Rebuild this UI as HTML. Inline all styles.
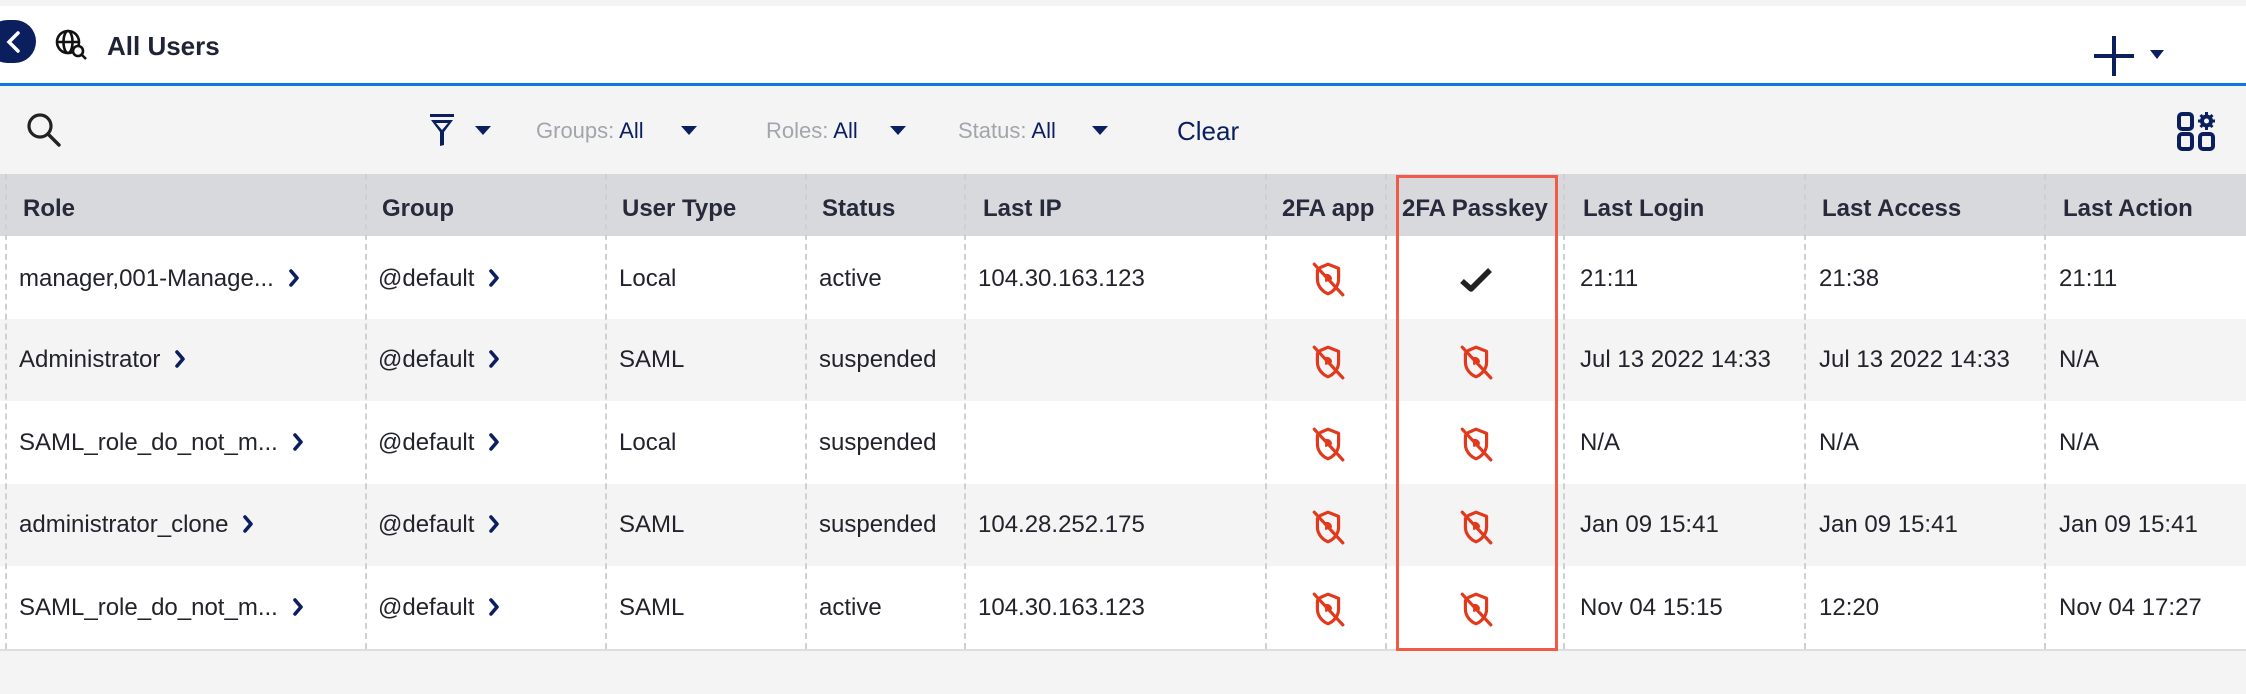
<!DOCTYPE html>
<html><head><meta charset="utf-8"><style>
*{margin:0;padding:0;box-sizing:border-box}
body{width:2246px;height:694px;background:#f4f4f4;position:relative;overflow:hidden;font-family:"Liberation Sans",sans-serif;color:#22232b}
.a{position:absolute}
.hdr{position:absolute;left:0;top:6px;width:2246px;height:78px;background:#fff}
.blue{position:absolute;left:0;top:83px;width:2246px;height:3px;background:#1673e6}
.thead{position:absolute;left:0;top:174px;width:2246px;height:62px;background:#d8d9dd}
.row{position:absolute;left:0;width:2246px;height:83px}
.th{position:absolute;top:178px;height:62px;line-height:62px;font-size:24px;font-weight:bold;color:#262a3a}
.td{position:absolute;font-size:24px;line-height:30px;white-space:nowrap}
.dv{position:absolute;top:174px;height:475px;border-left:2px dashed #cfd0d4;width:0}
.chev{display:inline-block;width:12px;height:18px;margin-left:14px;vertical-align:-1px}
.fl{position:absolute;top:118px;font-size:22px;color:#a3a5ad}
.fl b{font-weight:normal;color:#0b1f5e}
.car{position:absolute;width:0;height:0;border-left:8px solid transparent;border-right:8px solid transparent;border-top:9px solid #0b1f5e}
</style></head><body>
<svg width="0" height="0" style="position:absolute"><defs>
<symbol id="sh" viewBox="0 0 32 34"><g stroke="#e2391c" stroke-width="3" fill="none" stroke-linecap="round" stroke-linejoin="round"><path d="M9 6 L16 3 L26 7 V17 C26 24 21 29 16 31 C11 29 6 24 6 17 V9"/><path d="M14 13 A4 4 0 0 1 19 17 L14 19 Z" fill="#e2391c" stroke-width="1.5"/><path d="M3 3 L30 32"/></g></symbol>
<symbol id="ch" viewBox="0 0 12 18"><path d="M3 2 L9 9 L3 16" stroke="#0b1f5e" stroke-width="3.6" fill="none" stroke-linecap="round" stroke-linejoin="round"/></symbol>
</defs></svg>
<div class="hdr"></div>
<div class="blue"></div>
<div class="a" style="left:-14px;top:20px;width:50px;height:43px;border-radius:22px;background:#0b1f5e"></div>
<svg class="a" style="left:4px;top:30px" width="20" height="24" viewBox="0 0 20 24"><path d="M14 3 L5 12 L14 21" stroke="#fff" stroke-width="3.5" fill="none" stroke-linecap="round"/></svg>
<svg class="a" style="left:54px;top:29px" width="34" height="32" viewBox="0 0 34 32"><g stroke="#111" stroke-width="2.6" fill="none"><circle cx="14" cy="13" r="11"/><ellipse cx="14" cy="13" rx="4.5" ry="11"/><line x1="3" y1="13" x2="25" y2="13"/><circle cx="24" cy="22" r="5" fill="#fff"/><line x1="28" y1="26" x2="32" y2="30"/></g></svg>
<div class="a" style="left:107px;top:31px;font-size:26px;font-weight:bold;color:#1f2335">All Users</div>
<svg class="a" style="left:2092px;top:36px" width="44" height="40" viewBox="0 0 44 40"><path d="M22 0V40M2 20H42" stroke="#0b1f5e" stroke-width="4"/></svg>
<div class="car" style="left:2150px;top:50px;border-left-width:7px;border-right-width:7px"></div>

<svg class="a" style="left:26px;top:112px" width="36" height="36" viewBox="0 0 36 36"><circle cx="14" cy="14" r="11" stroke="#222" stroke-width="3.2" fill="none"/><path d="M22 22 L33 33" stroke="#222" stroke-width="3.4" stroke-linecap="round"/></svg>
<svg class="a" style="left:428px;top:113px" width="28" height="34" viewBox="0 0 28 34"><rect x="2" y="1" width="24" height="3" fill="#0b1f5e"/><path d="M3 7 H25 L16 19 V32 L12 33 V19 Z" fill="#0b1f5e"/><path d="M8 10 H20 L14 17 Z" fill="#f4f4f4"/></svg>
<div class="car" style="left:475px;top:126px"></div>
<div class="fl" style="left:536px">Groups: <b>All</b></div><div class="car" style="left:681px;top:126px"></div>
<div class="fl" style="left:766px">Roles: <b>All</b></div><div class="car" style="left:890px;top:126px"></div>
<div class="fl" style="left:958px">Status: <b>All</b></div><div class="car" style="left:1092px;top:126px"></div>
<div class="a" style="left:1177px;top:116px;font-size:26px;color:#0b1f5e">Clear</div>
<svg class="a" style="left:2176px;top:110px" width="42" height="42" viewBox="0 0 42 42"><g stroke="#0b1f5e" stroke-width="4" fill="none"><rect x="3" y="4" width="13" height="15" rx="3"/><rect x="3" y="24" width="13" height="15" rx="3"/><rect x="24" y="24" width="13" height="15" rx="3"/><circle cx="30.5" cy="11" r="4.5"/></g><g stroke="#0b1f5e" stroke-width="3"><path d="M30.5 2V5M30.5 17V20M22 11H25M36 11H39M24.5 5L26.5 7M34.5 15L36.5 17M24.5 17L26.5 15M34.5 7L36.5 5"/></g></svg>

<div class="thead"></div>
<div class="row" style="top:236px;background:#fff"></div>
<div class="row" style="top:319px;background:#f4f4f4"></div>
<div class="row" style="top:401px;background:#fff"></div>
<div class="row" style="top:484px;background:#f4f4f4"></div>
<div class="row" style="top:566px;background:#fff"></div>
<div class="a" style="left:0;top:649px;width:2246px;height:2px;background:#dcdde0"></div>

<div class="dv" style="left:5px"></div><div class="dv" style="left:365px"></div><div class="dv" style="left:605px"></div><div class="dv" style="left:805px"></div><div class="dv" style="left:964px"></div><div class="dv" style="left:1265px"></div><div class="dv" style="left:1385px"></div><div class="dv" style="left:1563px"></div><div class="dv" style="left:1804px"></div><div class="dv" style="left:2044px"></div>

<div class="th" style="left:23px">Role</div><div class="th" style="left:382px">Group</div><div class="th" style="left:622px">User Type</div><div class="th" style="left:822px">Status</div><div class="th" style="left:983px">Last IP</div><div class="th" style="left:1282px">2FA app</div><div class="th" style="left:1402px">2FA Passkey</div><div class="th" style="left:1583px">Last Login</div><div class="th" style="left:1822px">Last Access</div><div class="th" style="left:2063px">Last Action</div>

<div class="td" style="left:19px;top:264px">manager,001-Manage...<svg class="chev"><use href="#ch"/></svg></div>
<div class="td" style="left:378px;top:264px">@default<svg class="chev"><use href="#ch"/></svg></div>
<div class="td" style="left:619px;top:264px">Local</div><div class="td" style="left:819px;top:264px">active</div><div class="td" style="left:978px;top:264px">104.30.163.123</div>
<svg class="a" style="left:1311px;top:261px" width="34" height="36"><use href="#sh"/></svg>
<svg class="a" style="left:1458px;top:266px" width="36" height="28" viewBox="0 0 36 28"><path d="M4 15 L13 23 L32 4" stroke="#222" stroke-width="5.5" fill="none" stroke-linejoin="round"/></svg>
<div class="td" style="left:1580px;top:264px">21:11</div><div class="td" style="left:1819px;top:264px">21:38</div><div class="td" style="left:2059px;top:264px">21:11</div>

<div class="td" style="left:19px;top:345px">Administrator<svg class="chev"><use href="#ch"/></svg></div>
<div class="td" style="left:378px;top:345px">@default<svg class="chev"><use href="#ch"/></svg></div>
<div class="td" style="left:619px;top:345px">SAML</div><div class="td" style="left:819px;top:345px">suspended</div>
<svg class="a" style="left:1311px;top:344px" width="34" height="36"><use href="#sh"/></svg>
<svg class="a" style="left:1459px;top:344px" width="34" height="36"><use href="#sh"/></svg>
<div class="td" style="left:1580px;top:345px">Jul 13 2022 14:33</div><div class="td" style="left:1819px;top:345px">Jul 13 2022 14:33</div><div class="td" style="left:2059px;top:345px">N/A</div>

<div class="td" style="left:19px;top:428px">SAML_role_do_not_m...<svg class="chev"><use href="#ch"/></svg></div>
<div class="td" style="left:378px;top:428px">@default<svg class="chev"><use href="#ch"/></svg></div>
<div class="td" style="left:619px;top:428px">Local</div><div class="td" style="left:819px;top:428px">suspended</div>
<svg class="a" style="left:1311px;top:426px" width="34" height="36"><use href="#sh"/></svg>
<svg class="a" style="left:1459px;top:426px" width="34" height="36"><use href="#sh"/></svg>
<div class="td" style="left:1580px;top:428px">N/A</div><div class="td" style="left:1819px;top:428px">N/A</div><div class="td" style="left:2059px;top:428px">N/A</div>

<div class="td" style="left:19px;top:510px">administrator_clone<svg class="chev"><use href="#ch"/></svg></div>
<div class="td" style="left:378px;top:510px">@default<svg class="chev"><use href="#ch"/></svg></div>
<div class="td" style="left:619px;top:510px">SAML</div><div class="td" style="left:819px;top:510px">suspended</div><div class="td" style="left:978px;top:510px">104.28.252.175</div>
<svg class="a" style="left:1311px;top:509px" width="34" height="36"><use href="#sh"/></svg>
<svg class="a" style="left:1459px;top:509px" width="34" height="36"><use href="#sh"/></svg>
<div class="td" style="left:1580px;top:510px">Jan 09 15:41</div><div class="td" style="left:1819px;top:510px">Jan 09 15:41</div><div class="td" style="left:2059px;top:510px">Jan 09 15:41</div>

<div class="td" style="left:19px;top:593px">SAML_role_do_not_m...<svg class="chev"><use href="#ch"/></svg></div>
<div class="td" style="left:378px;top:593px">@default<svg class="chev"><use href="#ch"/></svg></div>
<div class="td" style="left:619px;top:593px">SAML</div><div class="td" style="left:819px;top:593px">active</div><div class="td" style="left:978px;top:593px">104.30.163.123</div>
<svg class="a" style="left:1311px;top:591px" width="34" height="36"><use href="#sh"/></svg>
<svg class="a" style="left:1459px;top:591px" width="34" height="36"><use href="#sh"/></svg>
<div class="td" style="left:1580px;top:593px">Nov 04 15:15</div><div class="td" style="left:1819px;top:593px">12:20</div><div class="td" style="left:2059px;top:593px">Nov 04 17:27</div>

<div class="a" style="left:1396px;top:175px;width:162px;height:476px;border:3px solid #f25a48"></div>
</body></html>
